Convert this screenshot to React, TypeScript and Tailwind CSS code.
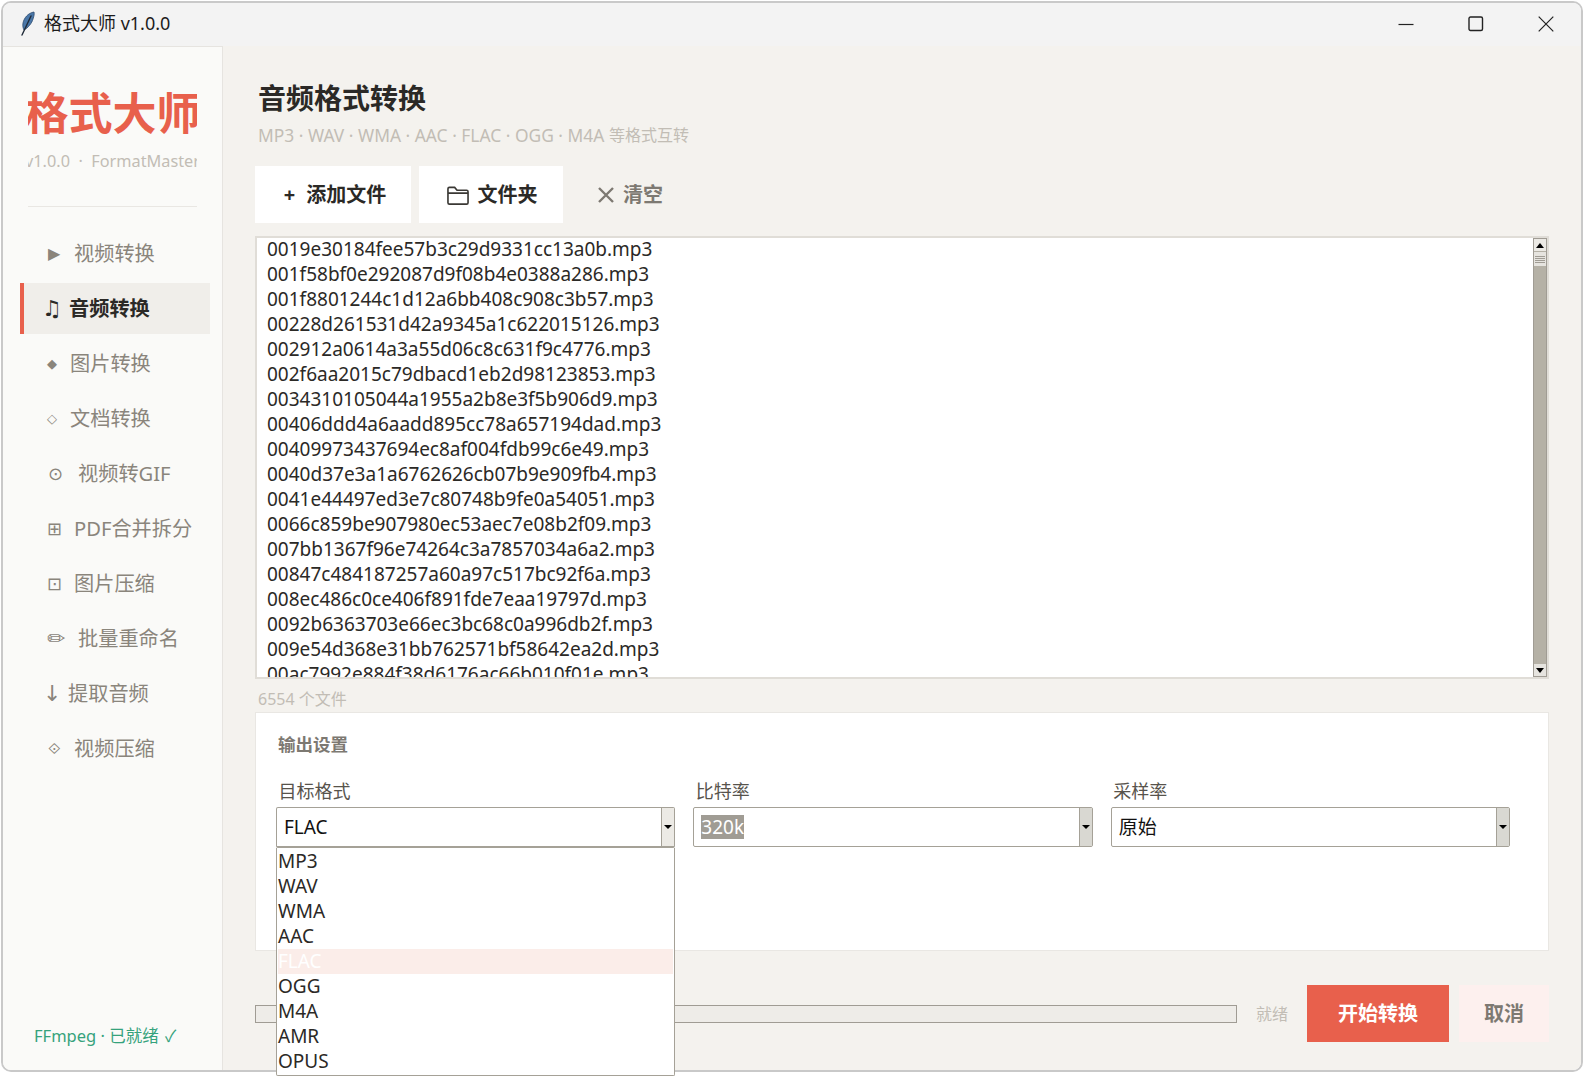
import React from 'react';

const UI_FONT = "font-['Noto_Sans','Noto_Sans_CJK_SC',sans-serif]";

const navItems = [
  { icon: '▶', label: '视频转换', gap: 'w-[50px] pl-[24px]', size: 'text-[16px]' },
  { icon: '♫', label: '音频转换', gap: 'w-[45px] pl-[18px]', size: 'text-[22px]', active: true },
  { icon: '◆', label: '图片转换', gap: 'w-[46px] pl-[23px]', size: 'text-[13px]' },
  { icon: '◇', label: '文档转换', gap: 'w-[46px] pl-[23px]', size: 'text-[13px]' },
  { icon: '⊙', label: '视频转GIF', gap: 'w-[54px] pl-[24px]', size: 'text-[18px]' },
  { icon: '⊞', label: 'PDF合并拆分', gap: 'w-[50px] pl-[23px]', size: 'text-[18px]' },
  { icon: '⊡', label: '图片压缩', gap: 'w-[50px] pl-[23px]', size: 'text-[18px]' },
  { icon: '✏', label: '批量重命名', gap: 'w-[54px] pl-[23px]', size: 'text-[22px]' },
  { icon: '↓', label: '提取音频', gap: 'w-[44px] pl-[19px]', size: 'text-[22px]' },
  { icon: '⟐', label: '视频压缩', gap: 'w-[50px] pl-[24px]', size: 'text-[16px]' },
];

const files = [
  '0019e30184fee57b3c29d9331cc13a0b.mp3',
  '001f58bf0e292087d9f08b4e0388a286.mp3',
  '001f8801244c1d12a6bb408c908c3b57.mp3',
  '00228d261531d42a9345a1c622015126.mp3',
  '002912a0614a3a55d06c8c631f9c4776.mp3',
  '002f6aa2015c79dbacd1eb2d98123853.mp3',
  '0034310105044a1955a2b8e3f5b906d9.mp3',
  '00406ddd4a6aadd895cc78a657194dad.mp3',
  '00409973437694ec8af004fdb99c6e49.mp3',
  '0040d37e3a1a6762626cb07b9e909fb4.mp3',
  '0041e44497ed3e7c80748b9fe0a54051.mp3',
  '0066c859be907980ec53aec7e08b2f09.mp3',
  '007bb1367f96e74264c3a7857034a6a2.mp3',
  '00847c484187257a60a97c517bc92f6a.mp3',
  '008ec486c0ce406f891fde7eaa19797d.mp3',
  '0092b6363703e66ec3bc68c0a996db2f.mp3',
  '009e54d368e31bb762571bf58642ea2d.mp3',
  '00ac7992e884f38d6176ac66b010f01e.mp3',
];

const formats = ['MP3', 'WAV', 'WMA', 'AAC', 'FLAC', 'OGG', 'M4A', 'AMR', 'OPUS'];

const Feather = () => (
  <svg width="18" height="26" viewBox="0 0 18 26" fill="none">
    <path d="M15 1 C9 2 5 7 4 12 C3.5 15 4 17 5 19 C9 17 13 12 14 8 C15 5 15.5 3 15 1 Z" fill="#4a77a8" stroke="#2c4a6e" strokeWidth="0.8" />
    <path d="M12 5 L3 24" stroke="#1f2a38" strokeWidth="1.4" strokeLinecap="round" />
  </svg>
);

const Combo = ({ label, value, selected, focused, children }: {
  label: string;
  value: string;
  selected?: boolean;
  focused?: boolean;
  children?: React.ReactNode;
}) => (
  <div className="flex-1 relative">
    <div className="h-[36px] pl-[2.5px] pt-[4px] flex items-center text-[18px] text-[#57534c]">{label}</div>
    <div className={`flex bg-white border border-[#a5a197] rounded-[2px] ${focused ? 'h-[41px] border-b-2' : 'h-[40px]'}`}>
      <div className="flex-1 flex items-center pl-[7px] text-[19px] text-[#111]">
        <span className={selected ? 'bg-[#a09c94] text-white leading-[24px]' : ''}>{value}</span>
      </div>
      <div className={`w-[13px] border-l border-[#a5a197] flex items-center justify-center ${focused ? 'bg-[#eceae5]' : 'bg-[#d9d8d2]'}`}>
        <div className="w-0 h-0 border-l-[4px] border-r-[4px] border-t-[4px] border-l-transparent border-r-transparent border-t-black" />
      </div>
    </div>
    {children}
  </div>
);

const App = () => {
  return (
    <div className={`relative w-[1584px] h-[1080px] bg-white pl-[1px] pt-[1px] ${UI_FONT}`}>
      <div className="w-[1582px] h-[1071px] border-2 border-[#c9c9c9] rounded-[10px] flex flex-col">
        {/* title bar */}
        <div className="h-[43px] shrink-0 bg-[#f3f3f3] rounded-t-[8px] flex items-center pb-[2px]">
          <div className="ml-[16px] w-[25px]"><Feather /></div>
          <span className="text-[18px] text-[#1c1c1c]">格式大师 v1.0.0</span>
          <div className="ml-auto flex items-center text-[#1c1c1c]">
            <svg width="16" height="16" viewBox="0 0 16 16" className="mr-[54px]"><path d="M0.5 8.5 H15.5" stroke="#222" strokeWidth="1.2" /></svg>
            <svg width="16" height="16" viewBox="0 0 16 16" className="mr-[54px]"><rect x="1" y="1" width="13.5" height="13.5" rx="1.5" fill="none" stroke="#222" strokeWidth="1.4" /></svg>
            <svg width="16" height="16" viewBox="0 0 16 16" className="mr-[27px]"><path d="M0.7 0.7 L15.3 15.3 M15.3 0.7 L0.7 15.3" stroke="#222" strokeWidth="1.2" /></svg>
          </div>
        </div>

        <div className="flex-1 flex min-h-0">
          {/* sidebar */}
          <aside className="w-[220px] shrink-0 bg-[#fafaf8] border-r border-t border-[#e6e4e0] rounded-bl-[8px] flex flex-col">
            <div className="mx-[25px] h-[160px] border-b border-[#e9e7e3] overflow-hidden flex flex-col items-center">
              <div className="mt-[33px] h-[66px] flex items-center text-[44px] font-bold text-[#e8604c] whitespace-nowrap">格式大师</div>
              <div className="h-[31px] flex items-center justify-center text-[16.3px] text-[#c2bdb5] whitespace-pre w-full"><span className="shrink-0">v1.0.0  ·  FormatMaster</span></div>
            </div>
            <nav className="mt-[21px] flex flex-col gap-[4px] pl-[17px]">
              {navItems.map((item) => (
                <div key={item.label} className={`h-[51px] w-[190px] border-l-4 flex items-center ${item.active ? 'border-[#e8604c] bg-[#f0eeea] font-bold text-[#2b2926]' : 'border-transparent text-[#8a857c]'}`}>
                  <span className={`${item.gap} shrink-0 font-['DejaVu_Sans',sans-serif] ${item.active ? 'font-bold' : 'font-normal'} ${item.size}`}>{item.icon}</span>
                  <span className="text-[20.2px] whitespace-nowrap">{item.label}</span>
                </div>
              ))}
            </nav>
            <div className="mt-auto mb-[21px] ml-[31px] text-[16.5px] text-[#35a27c]">FFmpeg · 已就绪 <span className="ml-[2px]">✓</span></div>
          </aside>

          {/* main */}
          <main className="flex-1 min-w-0 bg-[#f4f2ee] rounded-br-[8px] pl-[32px] pr-[32px] flex flex-col">
            <h1 className="mt-[31px] h-[42px] flex items-center text-[28px] font-bold text-[#2b2926] pl-[3px]">音频格式转换</h1>
            <p className="mt-[4px] h-[24px] flex items-center pl-[3px] text-[#c2bdb5] whitespace-pre">
              <span className="text-[17.4px]">MP3 · WAV · WMA · AAC · FLAC · OGG · M4A </span>
              <span className="text-[16px]">等格式互转</span>
            </p>

            <div className="mt-[19px] h-[57px] flex gap-[8px]">
              <button className="w-[156px] pl-[4px] pt-[1px] bg-white flex items-center justify-center gap-[11px] text-[20px] font-bold text-[#2b2926]">
                <span className="text-[20px] font-bold">+</span>添加文件
              </button>
              <button className="w-[144px] pl-[2px] pt-[1px] bg-white flex items-center justify-center gap-[9px] text-[20px] font-bold text-[#2b2926]">
                <svg width="22" height="21" viewBox="0 0 23 21" fill="none"><path d="M1 18 V3.5 A1.5 1.5 0 0 1 2.5 2 H8 L10.5 5 H20.5 A1.5 1.5 0 0 1 22 6.5 V18 A1.5 1.5 0 0 1 20.5 19.5 H2.5 A1.5 1.5 0 0 1 1 18 Z M1 8 H22" stroke="#3a3834" strokeWidth="1.7" /></svg>
                文件夹
              </button>
              <button className="ml-[27px] pt-[1px] flex items-center gap-[9px] text-[20px] font-bold text-[#7d7972]">
                <svg width="16" height="16" viewBox="0 0 16 16"><path d="M1 1 L15 15 M15 1 L1 15" stroke="#7d7972" strokeWidth="2.4" /></svg>
                清空
              </button>
            </div>

            {/* file list */}
            <div className="mt-[13px] h-[443px] border-2 border-[#e0ddd7] bg-white flex">
              <div className="flex-1 min-w-0 overflow-hidden pl-[10px]">
                {files.map((file) => (
                  <div key={file} className="h-[25px] leading-[22px] text-[19px] text-[#2b2926] whitespace-nowrap">{file}</div>
                ))}
              </div>
              <div className="w-[14px] shrink-0 border border-[#a09c94] bg-[#b5b1a6] flex flex-col">
                <div className="h-[12px] bg-[#eceae5] flex items-center justify-center">
                  <div className="w-0 h-0 border-l-[4px] border-r-[4px] border-b-[5px] border-l-transparent border-r-transparent border-b-black" />
                </div>
                <div className="mt-[1px] h-[14px] bg-[#e6e4df] flex flex-col justify-center gap-[1px] px-[1px]">
                  <div className="h-[1px] bg-[#a09c94]" />
                  <div className="h-[1px] bg-[#a09c94]" />
                  <div className="h-[1px] bg-[#a09c94]" />
                  <div className="h-[1px] bg-[#a09c94]" />
                </div>
                <div className="mt-auto h-[12px] bg-[#e6e4df] flex items-center justify-center">
                  <div className="w-0 h-0 border-l-[4px] border-r-[4px] border-t-[5px] border-l-transparent border-r-transparent border-t-black" />
                </div>
              </div>
            </div>

            <div className="h-[33px] flex items-center pl-[3px] pt-[7px] text-[16px] text-[#c2bdb5]">6554 个文件</div>

            {/* output settings */}
            <section className="h-[239px] border border-[#e9e7e3] bg-white pl-[20px] pr-[38px]">
              <div className="mt-[15px] h-[32px] flex items-center pl-[2px] text-[17.5px] font-bold text-[#7d7972]">输出设置</div>
              <div className="mt-[11px] flex gap-[18px]">
                <Combo label="目标格式" value="FLAC" focused>
                  <div className="absolute left-0 right-0 top-full h-[228px] bg-white border border-[#a5a197] border-t-0 rounded-b-[2px] pt-[1px] z-10 px-[1px]">
                    {formats.map((format) => (
                      <div key={format} className={`h-[25px] leading-[25px] text-[19px] ${format === 'FLAC' ? 'bg-[#fbede9] text-white' : 'text-[#2b2926]'}`}>{format}</div>
                    ))}
                  </div>
                </Combo>
                <Combo label="比特率" value="320k" selected />
                <Combo label="采样率" value="原始" />
              </div>
            </section>

            {/* footer */}
            <div className="mt-[34px] h-[57px] flex items-center">
              <div className="flex-1 h-[18px] border border-[#a09c94] bg-[#eeece8]" />
              <span className="ml-[19px] w-[32px] text-[16px] text-[#c2bdb5] whitespace-nowrap">就绪</span>
              <button className="ml-[19px] w-[142px] h-[57px] bg-[#e8604c] text-white text-[20px] font-bold">开始转换</button>
              <button className="ml-[10px] w-[90px] h-[57px] bg-[#fdf0ee] text-[#7d7972] text-[20px] font-bold">取消</button>
            </div>
          </main>
        </div>
      </div>
    </div>
  );
};

export default App;
